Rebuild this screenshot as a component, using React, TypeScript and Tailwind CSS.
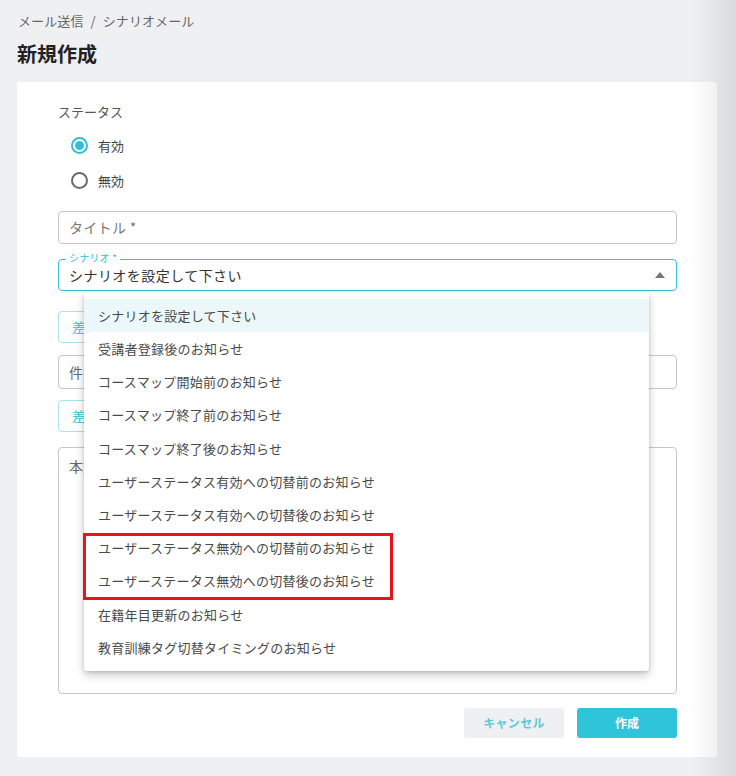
import React from "react";

const scenarios = [
  "シナリオを設定して下さい",
  "受講者登録後のお知らせ",
  "コースマップ開始前のお知らせ",
  "コースマップ終了前のお知らせ",
  "コースマップ終了後のお知らせ",
  "ユーザーステータス有効への切替前のお知らせ",
  "ユーザーステータス有効への切替後のお知らせ",
  "ユーザーステータス無効への切替前のお知らせ",
  "ユーザーステータス無効への切替後のお知らせ",
  "在籍年目更新のお知らせ",
  "教育訓練タグ切替タイミングのお知らせ",
];

function Radio({ label, checked }: { label: string; checked?: boolean }) {
  return (
    <label className="flex items-center gap-[10px] h-[35px] pl-[13px]">
      <span
        className={
          checked
            ? "w-[17px] h-[17px] rounded-full border-2 border-[#32bfd6] flex items-center justify-center"
            : "w-[17px] h-[17px] rounded-full border-2 border-[#6b6b6b]"
        }
      >
        {checked && <span className="w-[9px] h-[9px] rounded-full bg-[#32bfd6]" />}
      </span>
      <span className="text-[13px] text-[#444]">{label}</span>
    </label>
  );
}

export default function App() {
  return (
    <div
      className="relative w-[736px] h-[776px] bg-[#eff0f2] overflow-hidden"
      style={{ fontFamily: '"Noto Sans CJK JP", "Noto Sans", sans-serif' }}
    >
      <div className="pl-[17px] pr-[19px] pt-[11px]">
        {/* Breadcrumb */}
        <div className="flex items-center gap-[7px] text-[13px] text-[#666] h-[20px] pl-[1px] tracking-[0.1px]">
          <span>メール送信</span>
          <span>/</span>
          <span>シナリオメール</span>
        </div>
        <h1 className="mt-[9px] text-[20px] font-bold text-[#222] leading-[28px]">新規作成</h1>

        {/* Card */}
        <div className="mt-[14px] bg-white rounded-[3px] h-[675px] pl-[41px] pr-[40px] pt-[20px]">
          <div className="text-[13px] text-[#555] h-[20px] leading-[20px]">ステータス</div>
          <div className="mt-[6px] flex flex-col">
            <Radio label="有効" checked />
            <Radio label="無効" />
          </div>

          {/* Title input */}
          <div className="mt-[13px] h-[33px] border border-[#c6c6c6] rounded-[4px] flex items-center px-[10px] text-[14px] text-[#777] tracking-[0.3px]">
            タイトル *
          </div>

          {/* Scenario select */}
          <div className="relative mt-[15px]">
            <div className="h-[32px] border border-[#35c0d6] rounded-[4px] flex items-center justify-between pl-[10px] pr-[11px]">
              <span className="text-[14px] text-[#333] tracking-[0.45px] mt-[1px]">シナリオを設定して下さい</span>
              <svg width="10" height="6" viewBox="0 0 10 6">
                <path d="M0 6 L5 0 L10 6 Z" fill="#777" />
              </svg>
            </div>
            <span className="absolute left-[8px] -top-[7px] bg-white px-[3px] text-[10px] leading-[12px] text-[#35c0d6] tracking-[0.2px]">
              シナリオ *
            </span>

            {/* Dropdown */}
            <div className="absolute z-10 left-[26px] top-[33px] w-[565px] bg-white rounded-[3px] py-[7px] shadow-[0_4px_10px_rgba(0,0,0,0.22),0_1px_3px_rgba(0,0,0,0.12)]">
              {scenarios.map((s, i) => (
                <div
                  key={s}
                  className={
                    i === 0
                      ? "h-[33.2px] flex items-center px-[14px] text-[13px] text-[#4a4a4a] tracking-[0.25px] bg-[#ebf7f9]"
                      : "h-[33.2px] flex items-center px-[14px] text-[13px] text-[#4a4a4a] tracking-[0.25px]"
                  }
                >
                  {s}
                </div>
              ))}
              <div className="absolute left-[-1px] top-[241px] w-[310px] h-[67px] border-[3px] border-[#e8141c]" />
            </div>
          </div>

          {/* Underlying fields */}
          <div className="mt-[20px] w-[180px] h-[32px] border border-[#a8e2ec] rounded-[4px] flex items-center px-[13px] text-[13px] text-[#32bfd6]">
            差し込み文字を挿入
          </div>
          <div className="mt-[12px] h-[34px] border border-[#c6c6c6] rounded-[4px] flex items-center px-[10px] text-[14px] text-[#666]">
            件名 *
          </div>
          <div className="mt-[11px] w-[180px] h-[32px] border border-[#a8e2ec] rounded-[4px] flex items-center px-[13px] text-[13px] text-[#32bfd6]">
            差し込み文字を挿入
          </div>
          <div className="mt-[15px] h-[247px] border border-[#c6c6c6] rounded-[4px] px-[10px] pt-[8px] text-[14px] text-[#666]">
            本文 *
          </div>

          {/* Actions */}
          <div className="mt-[14px] flex justify-end gap-[13px]">
            <button className="w-[100px] h-[30px] rounded-[3px] bg-[#eff0f2] text-[12px] font-bold text-[#5ec9dc] tracking-[0.3px]">
              キャンセル
            </button>
            <button className="w-[100px] h-[30px] rounded-[3px] bg-[#30c4da] text-[12px] font-bold text-white">
              作成
            </button>
          </div>
        </div>
      </div>

      {/* right edge shade */}
      <div className="pointer-events-none absolute right-0 top-0 h-full w-[45px] bg-gradient-to-r from-transparent to-[rgba(0,0,0,0.09)]" />
    </div>
  );
}
